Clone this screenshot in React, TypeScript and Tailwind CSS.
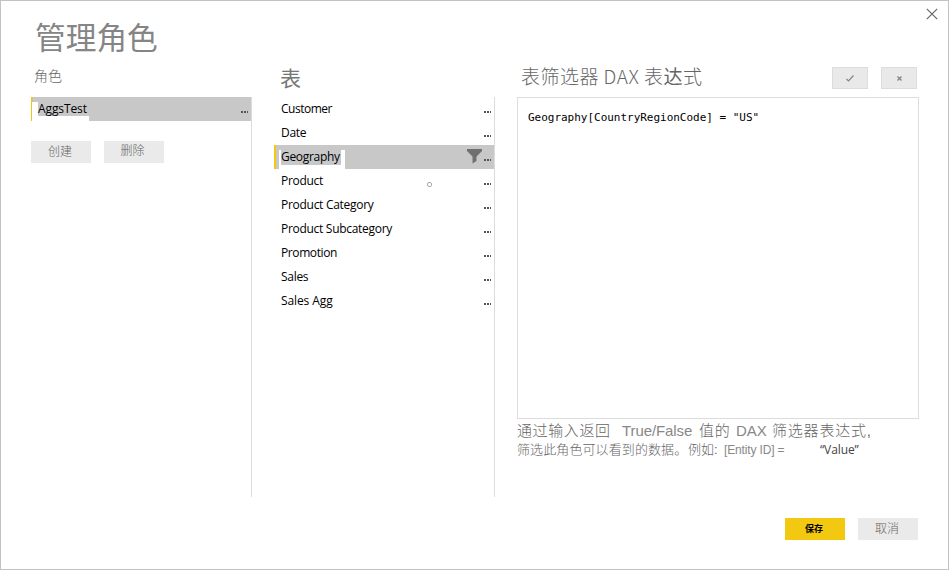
import React from "react";

const tables = [
  { name: "Customer", tracking: "tracking-[-0.48px]" },
  { name: "Date", tracking: "tracking-[-0.3px]" },
  { name: "Geography", tracking: "tracking-[-0.3px]", selected: true },
  { name: "Product", tracking: "tracking-[-0.3px]" },
  { name: "Product Category", tracking: "tracking-[-0.28px]" },
  { name: "Product Subcategory", tracking: "tracking-[-0.29px]" },
  { name: "Promotion", tracking: "tracking-[-0.4px]" },
  { name: "Sales", tracking: "tracking-[-0.3px]" },
  { name: "Sales Agg", tracking: "tracking-[-0.1px]" },
];

function Dots() {
  return (
    <span className="flex gap-px">
      <i className="h-[2px] w-[2px] bg-[#555]" />
      <i className="h-[2px] w-[2px] bg-[#555]" />
      <i className="h-[2px] w-px bg-[#555]" />
    </span>
  );
}

function TableRow({ name, tracking, selected }: { name: string; tracking: string; selected?: boolean }) {
  return (
    <div
      className={`flex h-6 items-start justify-between pr-[3px] ${
        selected ? "border-l-2 border-[#f2c811] bg-[#c8c8c8] pl-[3px]" : "pl-[7px]"
      }`}
    >
      {selected ? (
        <span className="mt-[5px] h-[19px] bg-white pr-1 pl-[2px]">
          <span className={`block h-[15px] w-[60px] bg-[#c8c8c8] leading-[13px] ${tracking}`}>{name}</span>
        </span>
      ) : (
        <span className={`mt-[4px] leading-[15px] ${tracking}`}>{name}</span>
      )}
      <span className="flex">
        {selected && (
          <svg className="mt-1 mr-[2px]" width="15" height="15" viewBox="0 0 15 15">
            <path d="M0 0H15V2L9.5 7.5V12L5.5 14.5V7.5L0 2Z" fill="#707070" />
          </svg>
        )}
        <span className="mt-[14px]">
          <Dots />
        </span>
      </span>
    </div>
  );
}

export default function App() {
  return (
    <main className="relative flex h-[570px] w-[949px] overflow-hidden border border-[#c3c3c3] bg-white pl-[30px] font-['Open_Sans','Noto_Sans_CJK_SC',sans-serif] text-[12px] whitespace-nowrap text-black">
      <section className="w-[221px]">
        <h1 className="mt-[13px] ml-1 h-[46px] font-['Noto_Sans_CJK_SC',sans-serif] text-[30.7px] leading-[44px] font-normal text-[#858585]">
          管理角色
        </h1>
        <h2 className="ml-[3px] h-[37px] pt-[5px] font-['Noto_Sans_CJK_SC',sans-serif] text-[14px] leading-[20px] font-light text-[#666]">
          角色
        </h2>
        <div className="h-[400px] border-r border-[#dcdcdc]">
          <div className="flex h-6 items-start justify-between bg-[#c8c8c8] pr-[3px]">
            <span className="flex h-6">
              <i className="h-6 w-[1px] bg-[#edc51b]" />
              <i className="h-[5px] w-[1px] bg-[#dcc365]" />
              <span className="mt-[5px] -ml-px h-[19px] bg-white pl-[6px]">
                <span className="block h-[14px] w-[51px] bg-[#c8c8c8] leading-[14px] tracking-[-0.1px]">AggsTest</span>
              </span>
            </span>
            <span className="mt-[14px]">
              <Dots />
            </span>
          </div>
          <div className="mt-5 flex gap-[13px] font-['Noto_Sans_CJK_SC',sans-serif] font-light text-[#666]">
            <button className="flex h-[22px] w-[60px] justify-center bg-[#eaeaea] pr-[2px] leading-[20px]">创建</button>
            <button className="flex h-[22px] w-[60px] justify-center bg-[#eaeaea] pr-[3px] leading-[18px]">删除</button>
          </div>
        </div>
      </section>

      <section className="ml-[22px] w-[221px]">
        <h2 className="mt-[61px] ml-[6px] h-[35px] font-['Noto_Sans_CJK_SC',sans-serif] text-[21px] leading-[30px] font-normal text-[#777]">
          表
        </h2>
        <div className="relative h-[400px] border-r border-[#dcdcdc]">
          {tables.map((t) => (
            <TableRow key={t.name} {...t} />
          ))}
          <i className="absolute top-[85px] left-[153px] size-[5px] rounded-[2px] border border-[#aaa]" />
        </div>
      </section>

      <section className="ml-[22px] w-[402px]">
        <header className="mt-[62px] flex h-[34px] items-start pr-[2px]">
          <h2 className="mt-[-1px] ml-1 font-['Noto_Sans_CJK_SC',sans-serif] text-[19px] leading-[27px] font-light tracking-[0.48px] text-[#666]">
            表筛选器 DAX 表<span className="font-normal">达</span>式
          </h2>
          <button className="mt-1 ml-auto flex h-[22px] w-9 items-center justify-center border border-[#dcdcdc] bg-[#e9e9e9]">
            <svg width="8" height="7" viewBox="0 0 8 7" fill="none" stroke="#858585" strokeWidth="1.2">
              <path d="M.5 4L2.5 6L7.5 .5" />
            </svg>
          </button>
          <button className="mt-1 ml-[13px] flex h-[22px] w-9 items-center justify-center border border-[#dcdcdc] bg-[#e9e9e9]">
            <svg width="5" height="5" viewBox="0 0 5 5" fill="none" stroke="#858585" strokeWidth="1.4">
              <path d="M.5 .5L4.5 4.5M4.5 .5L.5 4.5" />
            </svg>
          </button>
        </header>
        <div className="h-[322px] border border-[#dcdcdc] pt-3 pl-[10px] font-['DejaVu_Sans_Mono',monospace] text-[11px] leading-4 tracking-[-0.02px]">
          Geography[CountryRegionCode] = "US"
        </div>
        <p className="flex h-[22px] font-['Liberation_Sans','Noto_Sans_CJK_SC',sans-serif] text-[15px] leading-6 font-light text-[#666]">
          <span className="w-[105px] tracking-[0.6px]">通过输入返回</span>
          <span className="w-[77px] tracking-[-0.1px] text-[#888]">True/False</span>
          <span className="w-[37px] tracking-[0.8px]">值的</span>
          <span className="w-[36px] tracking-[-0.1px] text-[#888]">DAX</span>
          <span className="tracking-[0.8px]">筛选器表达式,</span>
        </p>
        <p className="flex h-5 font-['Liberation_Sans','Noto_Sans_CJK_SC',sans-serif] text-[13px] leading-[17px] font-light text-[#666]">
          <span className="w-[171px] tracking-[0.1px]">筛选此角色可以看到的数据。</span>
          <span className="w-[36px]">例如:</span>
          <span className="w-[96px] text-[12px] leading-[19px] tracking-[-0.15px] text-[#888]">[Entity ID] =</span>
          <span className="font-['Open_Sans',sans-serif] text-[12px] font-normal tracking-[-0.1px] text-[#444]">“Value”</span>
        </p>
        <footer className="mt-[57px] flex justify-end gap-[13px] pr-px font-['Noto_Sans_CJK_SC',sans-serif]">
          <button className="h-[22px] w-[60px] bg-[#f2c811] pr-[2px] text-[9px] leading-[18px] font-bold text-black">保存</button>
          <button className="flex h-[22px] w-[60px] justify-center bg-[#eaeaea] pr-[2px] text-[12px] leading-[20px] font-light text-[#666]">
            取消
          </button>
        </footer>
      </section>

      <svg className="absolute top-[7px] left-[925px]" width="12" height="12" viewBox="0 0 12 12" stroke="#666" strokeWidth="1.2">
        <path d="M.8 .8L11.2 11.2M11.2 .8L.8 11.2" />
      </svg>
    </main>
  );
}
